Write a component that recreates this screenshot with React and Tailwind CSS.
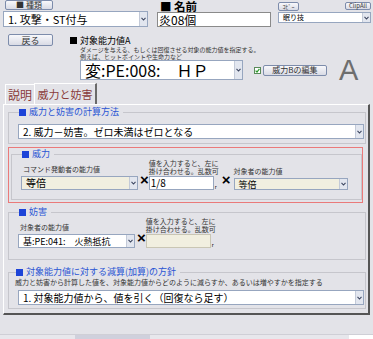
import React from 'react';

function Arrow() {
  return (
    <span className="flex h-full w-[8px] shrink-0 items-center justify-center border-l border-[#c3cad8] bg-[#e2e6ef]">
      <svg width="5" height="4" viewBox="0 0 5 4">
        <path d="M0.5 0.8 L2.5 3 L4.5 0.8" fill="none" stroke="#3c4660" strokeWidth="1.1" />
      </svg>
    </span>
  );
}

function Select({ className = '', text, bg = 'bg-white', textClass = 'text-[10px]' }) {
  return (
    <div className={`flex items-stretch border border-[#97a6bf] ${bg} ${className}`}>
      <span className={`flex flex-1 items-center whitespace-nowrap pl-1 leading-none ${textClass}`}>{text}</span>
      <Arrow />
    </div>
  );
}

function Btn({ className = '', children }) {
  return (
    <div className={`flex items-center justify-center whitespace-nowrap rounded-[2px] border border-[#7d8cab] bg-gradient-to-b from-[#f8f8fb] to-[#d9dbe5] text-[#333] ${className}`}>
      {children}
    </div>
  );
}

function Legend({ children }) {
  return (
    <legend className="ml-[1px] flex items-center gap-[3px] pr-1 text-[9px] leading-[10px] text-[#2a55d4]">
      <span className="inline-block h-[7px] w-[7px] bg-[#1d44d8]" />
      {children}
    </legend>
  );
}

const X = () => (
  <span className="mb-[1px] font-['Liberation_Sans',sans-serif] text-[15px] font-bold leading-none text-black">×</span>
);

export default function App() {
  return (
    <div className="h-[339px] w-[373px] overflow-hidden bg-[#e3e3e8] font-['Noto_Sans_CJK_JP',sans-serif] text-black">
      {/* top row */}
      <div className="flex pl-[3px]">
        <div className="w-[145px]">
          <Btn className="ml-[2px] h-[10px] w-[48px] text-[8px] leading-none">■ 種類</Btn>
          <Select className="mt-[1px] h-[16px] w-[145px]" text="1. 攻撃・ST付与" textClass="text-[11px]" />
        </div>
        <div className="ml-[9px] w-[114px]">
          <div className="flex h-[12px] items-end pl-[3px] text-[11.5px] font-bold leading-[12px]">■ 名前</div>
          <div className="flex h-[15px] items-center border border-[#8a8a8a] bg-white pl-[1px] text-[12px] leading-none">炎08個</div>
        </div>
        <div className="ml-[7px] w-[93px]">
          <div className="flex h-[11px] items-start justify-between pt-[2px]">
            <Btn className="h-[9px] w-[21px] text-[6px] leading-none">ｺﾋﾟｰ</Btn>
            <Btn className="h-[8px] w-[26px] text-[6px] leading-none">ClipAll</Btn>
          </div>
          <Select className="mt-[1px] h-[11px] w-[93px]" text="眠り技" textClass="text-[7px]" />
        </div>
      </div>

      {/* second row */}
      <div className="mt-[7px] flex">
        <Btn className="ml-[8px] h-[12px] w-[45px] text-[9px] leading-none">戻る</Btn>
        <div className="ml-[17px] flex-1">
          <div className="mt-[2px] flex items-center gap-[3px] text-[9px] leading-[9px]">
            <span className="inline-block h-[7px] w-[7px] bg-black" />
            対象能力値A
          </div>
          <div className="ml-[10px] mt-[1px] text-[6px] leading-[7px] text-[#333]">
            <div>ダメージを与える、もしくは回復させる対象の能力値を指定する。</div>
            <div>例えば、ヒットポイントや生命力など</div>
          </div>
          <div className="ml-[10px] flex h-[20px] items-center">
            <Select className="h-[20px] w-[163px]" text="変:PE:008:　ＨＰ" textClass="text-[16px]" />
            <span className="ml-[11px] flex h-[7px] w-[7px] items-center justify-center border border-[#5a8a5a] bg-white">
              <svg width="5" height="5" viewBox="0 0 5 5"><path d="M0.6 2.6 L2 4 L4.4 0.8" fill="none" stroke="#2a9a2a" strokeWidth="1.2" /></svg>
            </span>
            <Btn className="ml-[2px] h-[11px] w-[64px] text-[8px] leading-none">威力Bの編集</Btn>
            <span className="ml-[12px] flex h-[20px] items-center font-['Liberation_Sans',sans-serif] text-[29px] leading-[20px] text-[#6e6e6e]">A</span>
          </div>
        </div>
      </div>

      {/* tabs */}
      <div className="mt-[3px] flex h-[21px] items-end pl-[5px]">
        <div className="flex h-[20px] w-[29px] items-center justify-center whitespace-nowrap border-l border-t border-white text-[12px] leading-none text-[#8a3a3a]">説明</div>
        <div className="flex h-[21px] w-[63px] items-center justify-center whitespace-nowrap border-l border-r-2 border-t border-l-white border-r-[#6a6a6a] border-t-white text-[11px] leading-none text-[#8a3a3a]">威力と妨害</div>
      </div>

      {/* panel */}
      <div className="ml-[3px] h-[211px] w-[367px] border-b-2 border-l border-r-2 border-t border-b-[#555] border-l-white border-r-[#555] border-t-white pl-[4px] pr-[2px]">
        <fieldset className="mt-[2px] h-[37px] border border-[#c6c6cc] pl-[9px] pr-[1px]">
          <Legend>威力と妨害の計算方法</Legend>
          <Select className="mt-[7px] h-[15px] w-full" text="2. 威力－妨害。ゼロ未満はゼロとなる" textClass="text-[10px]" />
        </fieldset>

        <div className="mt-[3px] h-[56px] w-[355px] border-[1.5px] border-[#ea7a7a] pl-[2px] pt-[1px]">
          <fieldset className="h-[51px] border border-[#c6c6cc] pl-[9px]">
            <Legend>威力</Legend>
            <div className="flex items-end">
              <div>
                <div className="pl-[2px] text-[7px] leading-[9px] text-[#333]">コマンド発動者の能力値</div>
                <Select className="mt-[2px] h-[14px] w-[117px]" bg="bg-[#f1efe0]" text="等倍" textClass="text-[10px]" />
              </div>
              <span className="ml-[2px]"><X /></span>
              <div>
                <div className="text-[7px] leading-[8px] text-[#333]">値を入力すると、左に<br />掛け合わせる。乱数可</div>
                <div className="mt-[1px] flex items-end">
                  <div className="flex h-[14px] w-[65px] items-center border border-[#97a6bf] bg-white pl-[1px] text-[10px] leading-none">1/8</div>
                  <span className="ml-[1px] text-[5px] leading-[6px]">r</span>
                </div>
              </div>
              <span className="ml-[3px]"><X /></span>
              <div className="ml-[3px]">
                <div className="text-[7px] leading-[9px] text-[#333]">対象者の能力値</div>
                <Select className="mt-[2px] h-[12px] w-[114px]" bg="bg-[#f1efe0]" text="等倍" textClass="text-[9px]" />
              </div>
            </div>
          </fieldset>
        </div>

        <fieldset className="mt-[4px] h-[53px] border border-[#c6c6cc] pl-[9px]">
          <Legend>妨害</Legend>
          <div className="flex items-end">
            <div>
              <div className="pl-[2px] text-[7px] leading-[9px] text-[#333]">対象者の能力値</div>
              <Select className="mt-[2px] h-[14px] w-[117px]" text="基:PE:041:　火熱抵抗" textClass="text-[9px]" />
            </div>
            <span className="ml-[2px]"><X /></span>
            <div>
              <div className="text-[7px] leading-[8px] text-[#333]">値を入力すると、左に<br />掛け合わせる。乱数可</div>
              <div className="mt-[1px] flex items-end">
                <div className="h-[14px] w-[65px] border border-[#c9c6b4] bg-[#f1efe0]" />
                <span className="ml-[1px] text-[5px] leading-[6px]">r</span>
              </div>
            </div>
          </div>
        </fieldset>

        <fieldset className="mt-[7px] h-[42px] border border-[#c6c6cc] pl-[6px] pr-[1px]">
          <Legend>対象能力値に対する減算(加算)の方針</Legend>
          <div className="mt-[1px] text-[7px] leading-[9px] text-[#333]">威力と妨害から計算した値を、対象能力値からどのように減らすか、あるいは増やすかを指定する</div>
          <Select className="ml-[3px] mt-[3px] h-[15px]" text="1. 対象能力値から、値を引く（回復なら足す）" textClass="text-[10px]" />
        </fieldset>
      </div>

      {/* bottom strip */}
      <div className="mt-[19px] flex h-[6px] border-t border-[#cfcfd6] bg-[#e7e7ec]">
        <div className="ml-[75px] h-full w-[75px] bg-[#cfd0dc]" />
        <div className="flex-1" />
        <div className="h-full w-[24px] bg-white" />
      </div>
    </div>
  );
}
